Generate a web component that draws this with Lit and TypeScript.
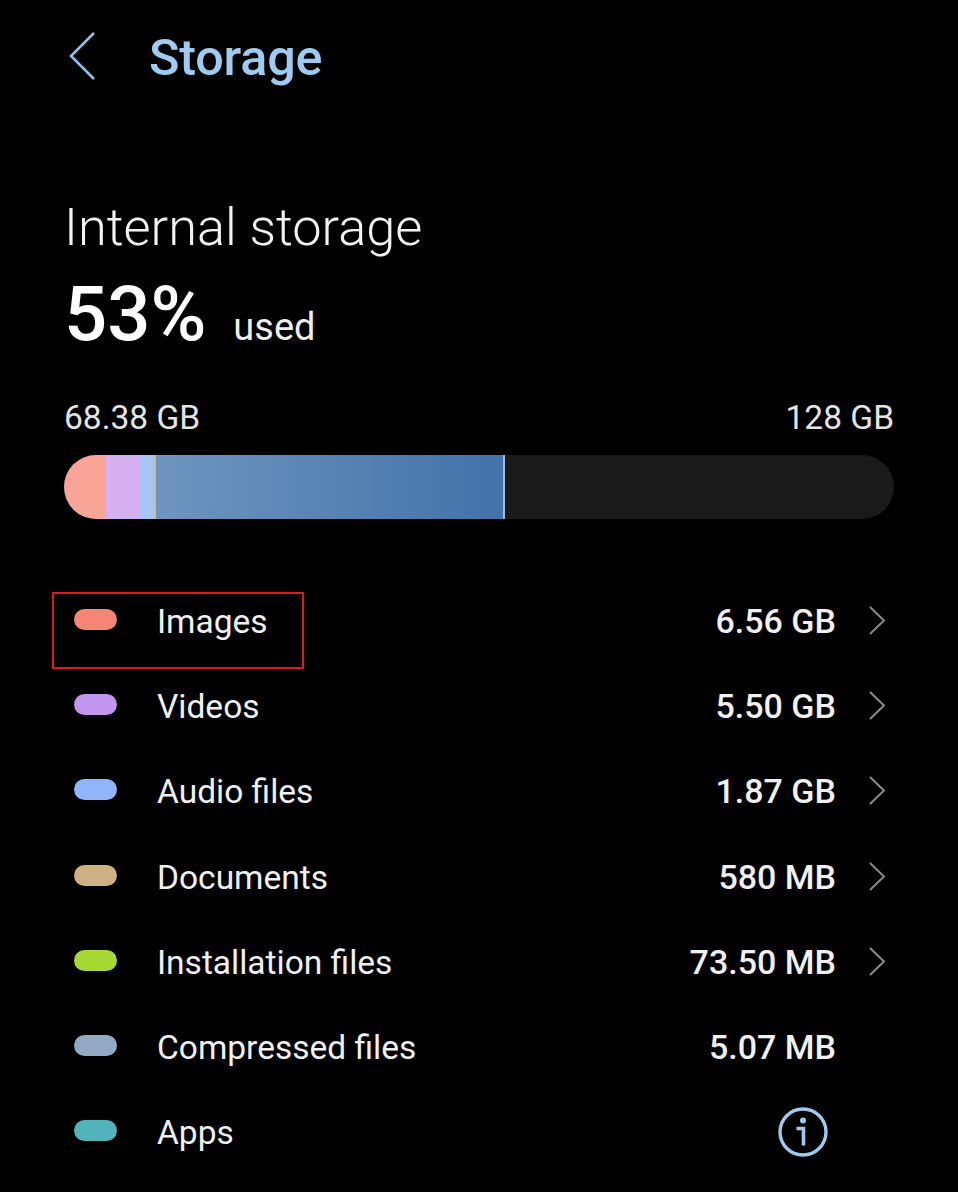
import { LitElement, html, css, svg } from "lit";
import { customElement } from "lit/decorators.js";

const rows = [
  { name: "Images", size: "6.56 GB", color: "#f58675", chev: true, boxed: true },
  { name: "Videos", size: "5.50 GB", color: "#c295ee", chev: true },
  { name: "Audio files", size: "1.87 GB", color: "#8fb6fb", chev: true },
  { name: "Documents", size: "580 MB", color: "#cfb083", chev: true },
  { name: "Installation files", size: "73.50 MB", color: "#a6d934", chev: true },
  { name: "Compressed files", size: "5.07 MB", color: "#93a8c4", chev: false },
  { name: "Apps", size: "", color: "#52b3bb", chev: false, info: true },
];

const chevron = svg`<path d="M2 2 L16 15.5 L2 29" fill="none" stroke="#8a8a8a" stroke-width="2"/>`;

@customElement("app-root")
export class AppRoot extends LitElement {
  static styles = css`
    :host {
      display: block;
      width: 958px;
      height: 1192px;
      background: #000;
      color: #f4f4f4;
      font-family: Roboto, "Noto Sans", sans-serif;
      overflow: hidden;
      box-sizing: border-box;
      padding: 0 64px;
    }
    .top {
      display: flex;
      align-items: center;
      gap: 53px;
      height: 112px;
      padding-left: 4px;
    }
    .top svg { display: block; flex: none; }
    .title {
      font-size: 50.3px;
      font-weight: 500;
      color: #9fcbf0;
      line-height: 1;
      letter-spacing: -0.2px;
      padding-top: 4px;
    }
    .internal {
      margin-top: 85px;
      font-size: 52.3px;
      font-weight: 300;
      line-height: 60px;
      color: #f2f2f2;
    }
    .used {
      display: flex;
      align-items: baseline;
      gap: 27px;
      margin-top: 15px;
      line-height: 84px;
    }
    .pct { font-size: 76px; font-weight: 500; color: #fff; }
    .usedtxt { font-size: 38px; font-weight: 400; color: #eee; }
    .labels {
      display: flex;
      justify-content: space-between;
      margin-top: 31px;
      font-size: 33.5px;
      line-height: 36px;
      color: #e4e4e4;
    }
    .bar {
      display: flex;
      height: 64px;
      width: 830px;
      margin-top: 19px;
      border-radius: 32px;
      overflow: hidden;
      background: #1a1a1a;
    }
    .seg { height: 100%; flex: none; }
    .list {
      margin-top: 58px;
      display: flex;
      flex-direction: column;
      position: relative;
    }
    .row {
      display: flex;
      align-items: center;
      height: 85.2px;
      position: relative;
    }
    .dot {
      flex: none;
      width: 43px;
      height: 21px;
      margin: 0 40px 0 10px;
      border-radius: 11px;
    }
    .name { flex: 1; font-size: 33.5px; color: #f0f0f0; padding-top: 4px; }
    .size {
      font-size: 34px;
      font-weight: 500;
      color: #f0f0f0;
      padding-top: 3px;
    }
    .chev { flex: none; width: 58px; display: flex; justify-content: flex-end; padding: 2px 8px 0 0; box-sizing: border-box; }
    .chev svg { display: block; }
    .info { flex: none; margin: 3px 66px 0 0; display: block; }
    .box {
      position: absolute;
      left: -12px;
      top: 15px;
      width: 252px;
      height: 77px;
      border: 2.5px solid #dd1a24;
      box-sizing: border-box;
      pointer-events: none;
    }
  `;

  render() {
    return html`
      <div class="top">
        <svg width="28" height="50" viewBox="0 0 28 50">
          <path d="M26 2 L3 25 L26 48" fill="none" stroke="#8fc0ea" stroke-width="2.6"/>
        </svg>
        <div class="title">Storage</div>
      </div>
      <div class="internal">Internal storage</div>
      <div class="used"><span class="pct">53%</span><span class="usedtxt">used</span></div>
      <div class="labels"><span>68.38 GB</span><span>128 GB</span></div>
      <div class="bar">
        <div class="seg" style="width:42px;background:#f8a598"></div>
        <div class="seg" style="width:34px;background:#d5afef"></div>
        <div class="seg" style="width:14px;background:#a7c6f8"></div>
        <div class="seg" style="width:2px;background:#c9bc9a"></div>
        <div class="seg" style="width:347px;background:linear-gradient(90deg,#6f95bf,#4272a9)"></div>
        <div class="seg" style="width:2px;background:#a9bccb"></div>
      </div>
      <div class="list">
        ${rows.map(
          (r) => html`
            <div class="row">
              ${r.boxed ? html`<div class="box"></div>` : ""}
              <span class="dot" style="background:${r.color}"></span>
              <span class="name">${r.name}</span>
              ${r.info
                ? html`<svg class="info" width="50" height="50" viewBox="0 0 50 50">
                    <circle cx="25" cy="25" r="23" fill="none" stroke="#9ccbef" stroke-width="3.4"/>
                    <circle cx="25" cy="13.5" r="3" fill="#9ccbef"/>
                    <path d="M18.5 21.5 H25.5 V38.5" fill="none" stroke="#9ccbef" stroke-width="3.6"/>
                  </svg>`
                : html`<span class="size">${r.size}</span>
                    <span class="chev">
                      ${r.chev
                        ? html`<svg width="18" height="31" viewBox="0 0 18 31">${chevron}</svg>`
                        : ""}
                    </span>`}
            </div>
          `
        )}
      </div>
    `;
  }
}
